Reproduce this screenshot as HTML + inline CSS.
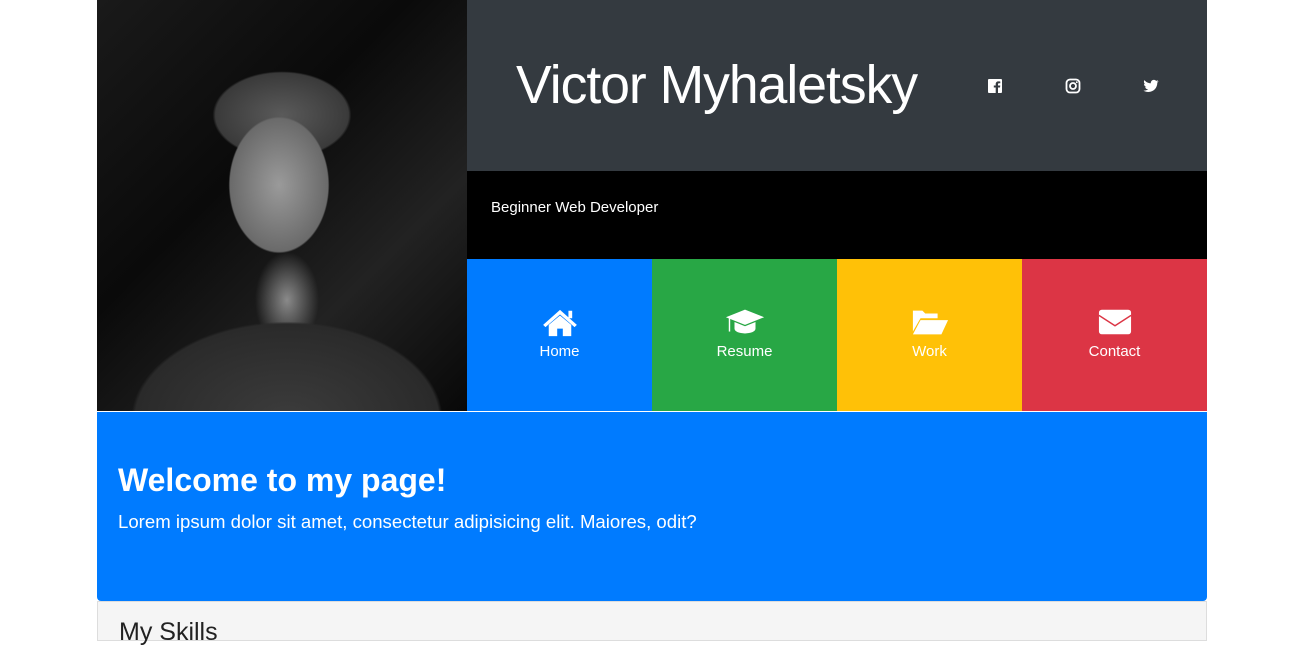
<!DOCTYPE html>
<html><head><style>
*{margin:0;padding:0;box-sizing:border-box}
body{width:1303px;height:627px;overflow:hidden;background:#fff;font-family:"Liberation Sans",sans-serif}
.wrap{position:absolute;left:97px;width:1110px;top:0}
.photo{position:absolute;left:0;top:0;width:370px;height:411px;background:
radial-gradient(ellipse 70px 95px at 182px 185px,#9a9a9a,#6a6a6a 70%,transparent 72%),
radial-gradient(ellipse 95px 60px at 185px 115px,#5a5a5a,#3a3a3a 70%,transparent 73%),
radial-gradient(ellipse 190px 120px at 190px 420px,#3c3c3c,#2a2a2a 80%,transparent 82%),
radial-gradient(ellipse 40px 60px at 190px 300px,#8a8a8a,transparent 80%),
linear-gradient(135deg,#1a1a1a,#0a0a0a 40%,#222 70%,#080808)}
.top{position:absolute;left:370px;top:0;width:740px;height:171px;background:#343a40;color:#fff}
.top h1{position:absolute;left:49px;top:54px;font-weight:normal;font-size:54px;letter-spacing:-1px;transform:scaleX(0.99);transform-origin:left}
.ic{position:absolute;top:78px;width:16px;height:16px}
.sub{position:absolute;left:370px;top:171px;width:740px;height:88px;background:#000;color:#fff;font-size:15px;padding:28px 24px}
.nav{position:absolute;left:370px;top:259px;width:740px;height:152px;display:flex}
.nav div{flex:1;color:#fff;text-align:center;font-size:15px;padding-top:48px}
.nav svg{display:block;margin:0 auto 6px;height:30px}
.wel{position:absolute;left:0;top:412px;width:1110px;height:189px;background:#007bff;border-radius:0 0 4px 4px;color:#fff;padding:50px 21px}
.wel h2{font-size:32px;font-weight:bold;margin-bottom:12px}
.wel p{font-size:18.6px}
.sk{position:absolute;left:0;top:601px;width:1110px;height:40px;background:#f5f5f5;border:1px solid #ddd;padding:16px 21px;font-size:25px;color:#222}
</style></head><body>
<div class="wrap">
<div class="photo"></div>
<div class="top"><h1>Victor Myhaletsky</h1>
<svg class="ic" style="left:520px" viewBox="0 0 16 16"><rect x="1" y="1" width="14" height="14" rx="1" fill="#fff"/><path d="M11 15V9.5h2l.3-2H11V6.3c0-.6.2-1 1-1h1.3V3.5c-.3 0-1-.1-1.8-.1-1.8 0-2.8 1-2.8 2.8v1.3H6.8v2h1.9V15z" fill="#343a40"/></svg>
<svg class="ic" style="left:598px" viewBox="0 0 16 16"><rect x="1.5" y="1.5" width="13" height="13" rx="3.5" fill="none" stroke="#fff" stroke-width="1.8"/><circle cx="8" cy="8" r="3" fill="none" stroke="#fff" stroke-width="1.8"/><circle cx="11.8" cy="4.2" r=".9" fill="#fff"/></svg>
<svg class="ic" style="left:676px" viewBox="0 0 16 16"><path d="M15.5 3.3c-.6.3-1.2.4-1.8.5.7-.4 1.1-1 1.4-1.700-.6.4-1.300.6-2 .8-1.2-1.3-3.3-1.3-4.5 0-.6.6-.9 1.5-.8 2.4C5.2 5.2 2.9 4 1.4 2.100.5 3.6 1 5.4 2.4 6.3c-.5 0-1-.2-1.4-.4 0 1.5 1.1 2.8 2.5 3.1-.5.1-1 .2-1.4.1.4 1.3 1.6 2.2 3 2.2-1.3 1-3 1.5-4.6 1.3 1.4.9 3.1 1.4 4.8 1.4 5.8 0 9-4.8 9-9v-.4c.6-.4 1.1-1 1.5-1.6z" fill="#fff"/></svg>
</div>
<div class="sub">Beginner Web Developer</div>
<div class="nav">
<div style="background:#007bff"><svg viewBox="0 0 40 32" width="38"><path d="M20 3L2 19l2.5 2.5L20 8l15.5 13.5L38 19z" fill="#fff"/><path d="M8 19v12h9v-8h6v8h9V19L20 9z" fill="#fff"/><rect x="29" y="4" width="4" height="8" fill="#fff"/></svg>Home</div>
<div style="background:#28a745"><svg viewBox="0 0 44 30" width="42"><path d="M22 2L2 10l20 8 20-8z" fill="#fff"/><path d="M11 15v7c0 3 5 5 11 5s11-2 11-5v-7l-11 4.5z" fill="#fff"/><rect x="5" y="11" width="1.5" height="14" fill="#fff"/></svg>Resume</div>
<div style="background:#ffc107"><svg viewBox="0 0 40 30" width="38"><path d="M2 3h10l3 3h13v5H10L2 25z" fill="#fff"/><path d="M10 13h29l-7 15H2z" fill="#fff"/></svg>Work</div>
<div style="background:#dc3545"><svg viewBox="0 0 36 30" width="34"><rect x="1" y="2" width="34" height="26" rx="3" fill="#fff"/><path d="M1 8l17 11 17-11" fill="none" stroke="#dc3545" stroke-width="1.5"/></svg>Contact</div>
</div>
<div class="wel"><h2>Welcome to my page!</h2><p>Lorem ipsum dolor sit amet, consectetur adipisicing elit. Maiores, odit?</p></div>
<div class="sk">My Skills</div>
</div>
</body></html>
